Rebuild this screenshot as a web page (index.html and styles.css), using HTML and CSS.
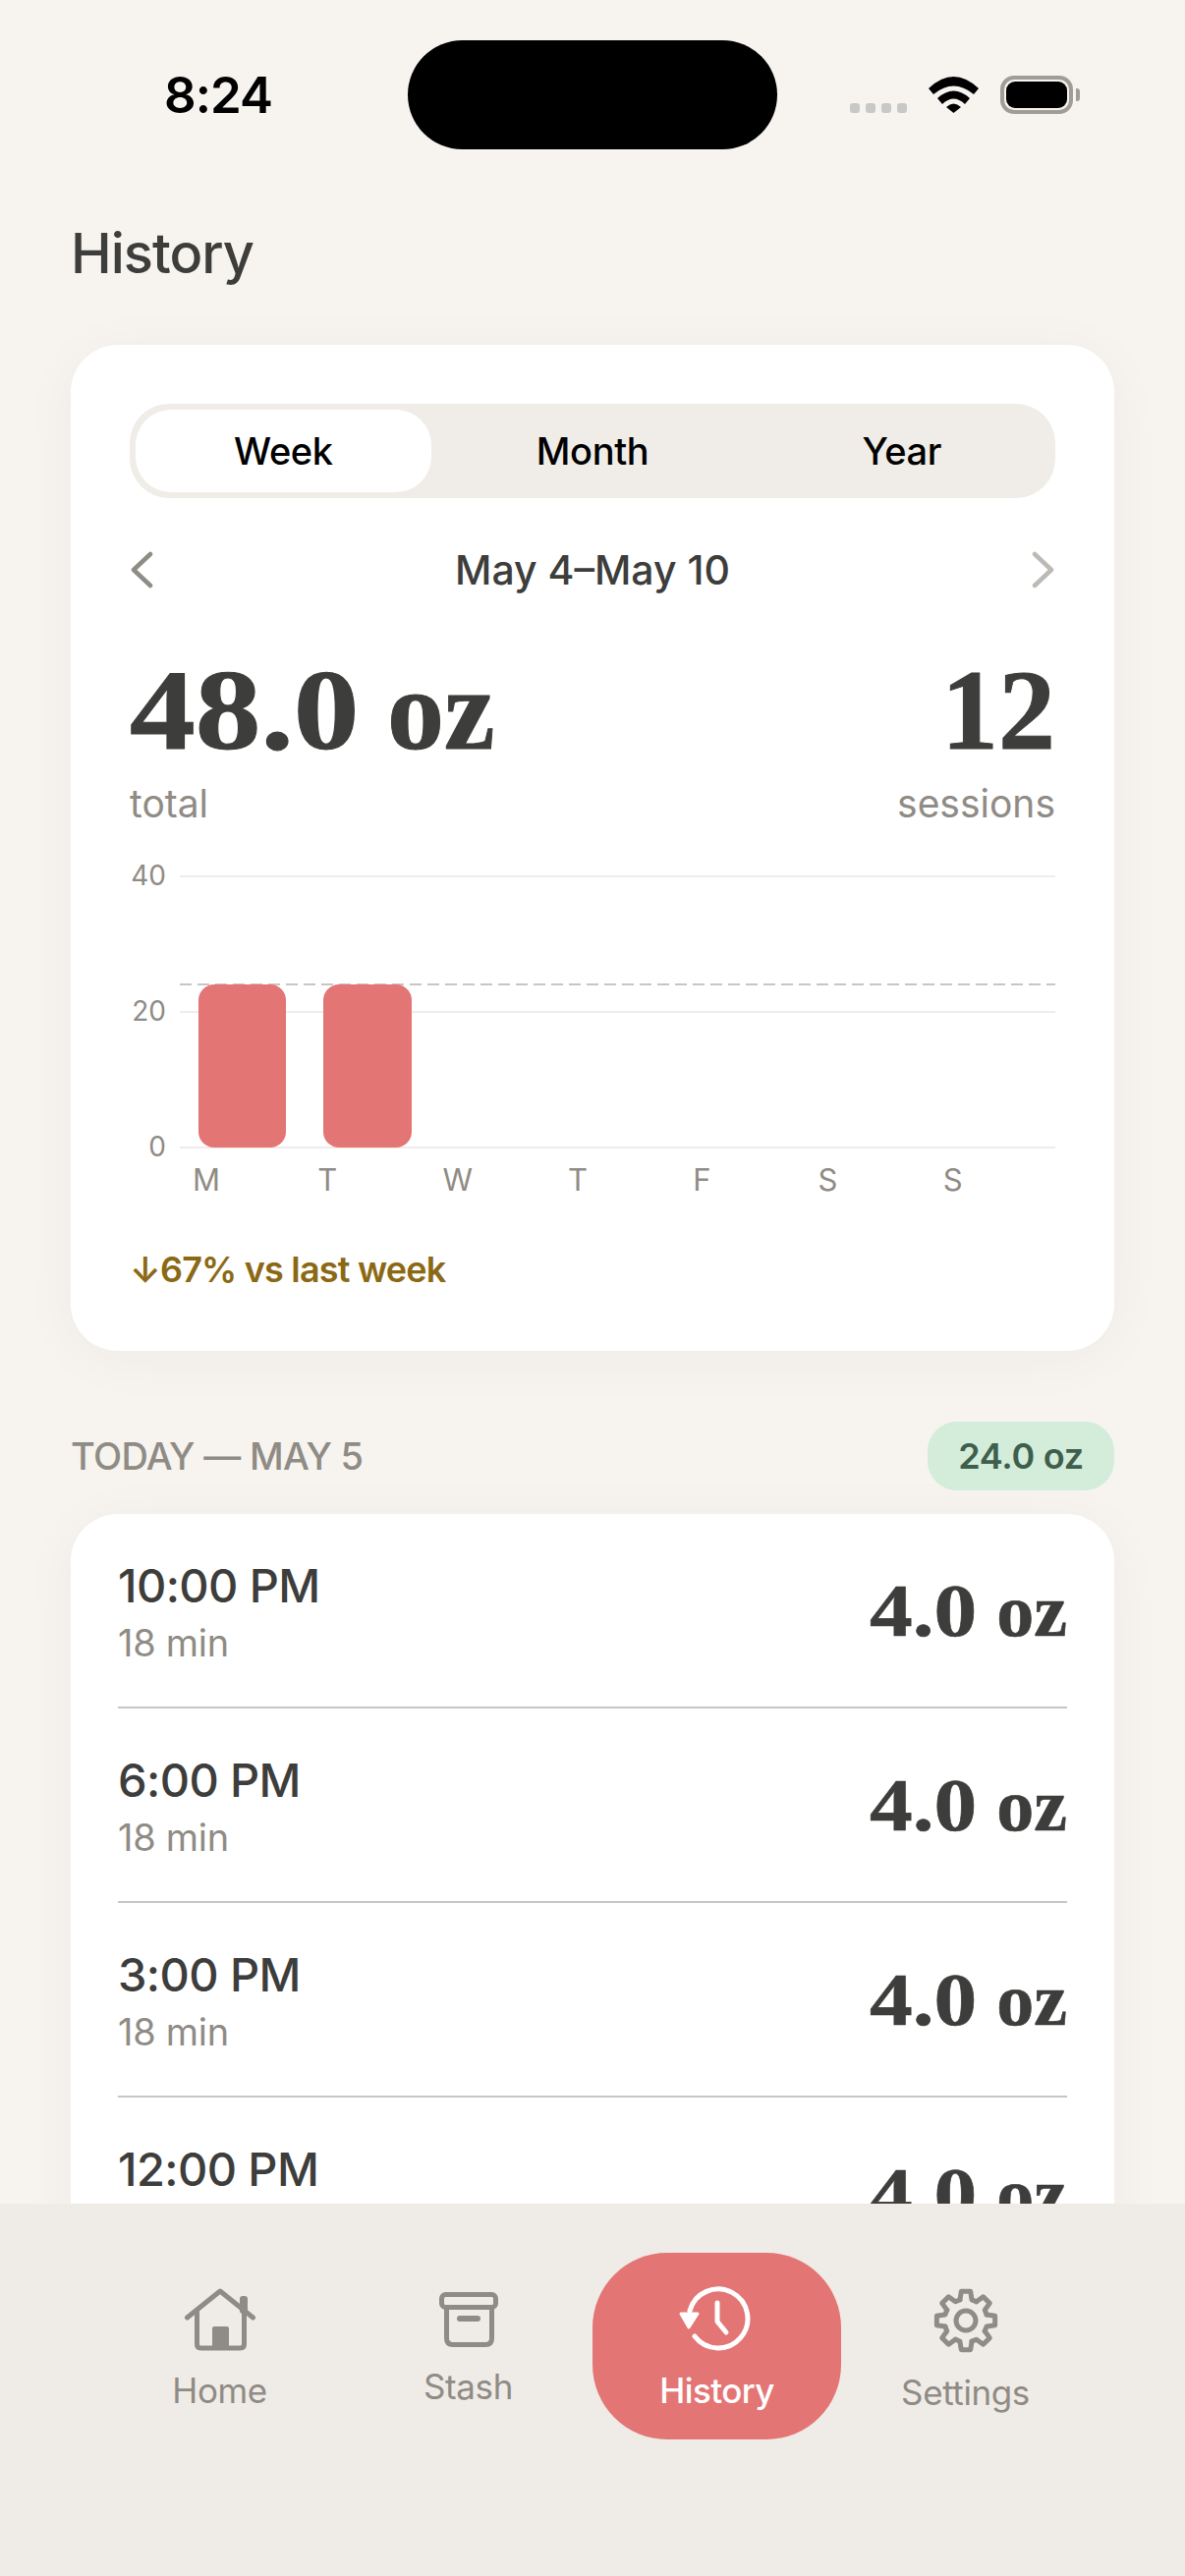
FILE: index.html
```html
<!DOCTYPE html>
<html lang="en">
<head>
<meta charset="utf-8">
<title>History</title>
<link rel="stylesheet" href="styles.css">
</head>
<body>
<div class="screen">
  <header class="status">
    <span class="clock">8:24</span>
    <span class="island"></span>
    <span class="status-icons">
      <span class="signal"><i></i><i></i><i></i><i></i></span>
      <svg class="wifi" viewBox="0 0 51 37"><path d="M0 12 Q25.5 -12 51 12 L46 18 Q25.5 1 5 18Z"/><path d="M9 22 Q25.5 7 42 22 L37 28 Q25.5 17 14 28Z"/><path d="M18 31 Q25.5 24 33 31 L25.5 37Z"/></svg>
      <span class="battery"><span class="battery-fill"></span></span>
      <span class="battery-nub"></span>
    </span>
  </header>

  <main class="content">
    <h1 class="page-title">History</h1>

    <section class="card summary">
      <div class="segments">
        <span class="segment is-active">Week</span>
        <span class="segment">Month</span>
        <span class="segment">Year</span>
      </div>

      <div class="range">
        <svg class="chevron" viewBox="0 0 24 38"><path d="M21 3 L4 19 L21 35"/></svg>
        <span class="range-label">May 4–May 10</span>
        <svg class="chevron is-dim" viewBox="0 0 24 38"><path d="M3 3 L20 19 L3 35"/></svg>
      </div>

      <div class="totals">
        <div class="total">
          <div class="big-number"><span class="figure">48.0</span> oz</div>
          <div class="caption">total</div>
        </div>
        <div class="total is-right">
          <div class="big-number">12</div>
          <div class="caption">sessions</div>
        </div>
      </div>

      <div class="chart">
        <div class="y-axis"><span>40</span><span>20</span><span>0</span></div>
        <div class="plot">
          <div class="grid-band"></div>
          <div class="grid-band"></div>
          <div class="baseline"></div>
          <div class="target-line"></div>
          <div class="bars">
            <div class="bar-cell"><div class="bar"></div></div>
            <div class="bar-cell"><div class="bar"></div></div>
            <div class="bar-cell"></div>
            <div class="bar-cell"></div>
            <div class="bar-cell"></div>
            <div class="bar-cell"></div>
            <div class="bar-cell"></div>
          </div>
        </div>
      </div>
      <div class="days">
        <span>M</span><span>T</span><span>W</span><span>T</span><span>F</span><span>S</span><span>S</span>
      </div>

      <p class="trend">↓67% vs last week</p>
    </section>

    <div class="day-head">
      <span class="day-title">TODAY — MAY 5</span>
      <span class="day-badge">24.0 oz</span>
    </div>

    <section class="card sessions">
      <div class="row">
        <div class="row-info"><div class="row-time">10:00 PM</div><div class="row-sub">18 min</div></div>
        <div class="row-amount"><span class="figure">4.0</span> oz</div>
      </div>
      <div class="row">
        <div class="row-info"><div class="row-time">6:00 PM</div><div class="row-sub">18 min</div></div>
        <div class="row-amount"><span class="figure">4.0</span> oz</div>
      </div>
      <div class="row">
        <div class="row-info"><div class="row-time">3:00 PM</div><div class="row-sub">18 min</div></div>
        <div class="row-amount"><span class="figure">4.0</span> oz</div>
      </div>
      <div class="row">
        <div class="row-info"><div class="row-time">12:00 PM</div><div class="row-sub">18 min</div></div>
        <div class="row-amount"><span class="figure">4.0</span> oz</div>
      </div>
    </section>
  </main>

  <nav class="tabbar">
    <a class="tab">
      <svg class="tab-icon icon-home" viewBox="0 0 72 64">
        <path class="line" d="M2.5 30 L36 3 L69.5 30"/>
        <path class="line" d="M12.5 24 V57 Q12.5 61 16.5 61 H56.5 Q60.5 61 60.5 57 V24"/>
        <rect class="solid" x="56" y="8" width="8" height="18" rx="3"/>
        <rect class="solid" x="28" y="39" width="17" height="23" rx="2"/>
      </svg>
      <span class="tab-label">Home</span>
    </a>
    <a class="tab is-stash">
      <svg class="tab-icon icon-stash" viewBox="0 0 60 56">
        <rect class="line" x="2.5" y="2.5" width="55" height="13" rx="4"/>
        <path class="line" d="M7.5 16 V47 Q7.5 53.5 14 53.5 H47 Q53.5 53.5 53.5 47 V16"/>
        <rect class="solid" x="18" y="24" width="24" height="6" rx="3"/>
      </svg>
      <span class="tab-label">Stash</span>
    </a>
    <a class="tab is-active">
      <svg class="tab-icon icon-history" viewBox="0 0 78 70">
        <path class="line" d="M13 26 A30 30 0 1 1 18 52"/>
        <path class="line" d="M41 18 V37 L50 48"/>
        <path class="solid arrow" d="M4 29 H21 L12 43Z"/>
      </svg>
      <span class="tab-label">History</span>
    </a>
    <a class="tab">
      <svg class="tab-icon icon-gear" viewBox="0 0 66 66">
        <g transform="translate(33 33)">
          <path id="gear-tooth" class="line" d="M-6.06 -21.15 L-4.69 -29.63 L4.69 -29.63 L6.06 -21.15 L10.67 -19.24"/>
          <use href="#gear-tooth" transform="rotate(45)"/>
          <use href="#gear-tooth" transform="rotate(90)"/>
          <use href="#gear-tooth" transform="rotate(135)"/>
          <use href="#gear-tooth" transform="rotate(180)"/>
          <use href="#gear-tooth" transform="rotate(225)"/>
          <use href="#gear-tooth" transform="rotate(270)"/>
          <use href="#gear-tooth" transform="rotate(315)"/>
          <circle class="line" r="10"/>
        </g>
      </svg>
      <span class="tab-label">Settings</span>
    </a>
  </nav>
</div>
</body>
</html>
```

FILE: styles.css
```css
* { box-sizing: border-box; }

html, body { margin: 0; padding: 0; }

body {
  width: 1206px;
  height: 2622px;
  overflow: hidden;
  font-family: "Inter", "Liberation Sans", sans-serif;
  color: #3d3d3b;
  background: #f7f4ef;
}

.screen {
  display: flex;
  flex-direction: column;
  height: 2622px;
}

/* Status bar */
.status {
  flex: none;
  display: grid;
  grid-template-columns: 415px 376px 1fr;
  align-items: center;
  height: 111px;
  margin-top: 41px;
}

.clock {
  padding-left: 167px;
  font-size: 51px;
  font-weight: 600;
  letter-spacing: -1px;
  color: #000;
}

.island {
  height: 111px;
  border-radius: 56px;
  background: #000;
}

.status-icons {
  display: flex;
  align-items: center;
  padding-left: 74px;
}

.signal {
  display: flex;
  gap: 6px;
  align-self: flex-end;
  margin: 0 22px 1px 0;
}

.signal i {
  width: 10px;
  height: 10px;
  border-radius: 3px;
  background: #c8c8c6;
}

.wifi {
  width: 51px;
  height: 37px;
  margin-right: 22px;
  fill: #000;
}

.battery {
  display: block;
  width: 74px;
  height: 39px;
  padding: 2px;
  border: 4px solid #a09d98;
  border-radius: 14px;
}

.battery-fill {
  display: block;
  height: 100%;
  border-radius: 9px;
  background: #000;
}

.battery-nub {
  width: 4px;
  height: 13px;
  margin-left: 3px;
  border-radius: 0 3px 3px 0;
  background: #a09d98;
}

/* Scrolling content */
.content {
  flex: 1;
  min-height: 0;
  overflow: hidden;
  padding: 0 72px;
}

.page-title {
  margin: 72px 0 0;
  font-size: 56px;
  line-height: 68px;
  font-weight: 500;
  letter-spacing: -1px;
}

.card {
  border-radius: 48px;
  background: #fff;
  box-shadow: 0 8px 60px rgba(60, 50, 40, 0.04);
}

.summary {
  height: 1024px;
  margin-top: 59px;
  padding: 60px;
}

/* Week / Month / Year switch */
.segments {
  display: flex;
  gap: 14px;
  height: 96px;
  padding: 6px;
  border-radius: 40px;
  background: #f0ede8;
}

.segment {
  flex: 1;
  display: flex;
  align-items: center;
  justify-content: center;
  border-radius: 36px;
  font-size: 38px;
  font-weight: 450;
  letter-spacing: -0.4px;
  color: #000;
}

.segment.is-active { background: #fff; }

/* Date range stepper */
.range {
  display: flex;
  align-items: center;
  justify-content: space-between;
  height: 60px;
  margin-top: 43px;
}

.range-label {
  font-size: 41px;
  font-weight: 500;
  letter-spacing: 0;
}

.chevron {
  width: 24px;
  height: 38px;
  fill: none;
  stroke: #8f8b85;
  stroke-width: 4.5;
  stroke-linecap: round;
  stroke-linejoin: round;
}

.chevron.is-dim { stroke: #bdbab5; }

/* Headline numbers */
.totals {
  display: flex;
  justify-content: space-between;
  margin-top: 54px;
}

.total.is-right { text-align: right; }

.big-number {
  font-family: "Liberation Serif", serif;
  font-size: 116px;
  line-height: 118px;
  font-weight: 700;
  -webkit-text-stroke: 1px #3d3d3b;
  color: #3d3d3b;
}

/* The numerals are set wider than the unit beside them */
.figure {
  display: inline-block;
  transform-origin: left center;
}

.big-number .figure {
  margin-right: 30px;
  transform: scaleX(1.15);
}

.caption {
  margin-top: 13px;
  font-size: 39px;
  line-height: 46px;
  color: #8f8b85;
  letter-spacing: 0;
}

/* Weekly chart */
.chart {
  display: flex;
  margin-top: 50px;
}

.y-axis {
  flex: none;
  display: flex;
  flex-direction: column;
  justify-content: space-between;
  align-items: flex-end;
  width: 37px;
  height: 276px;
  margin-right: 14px;
  font-size: 28px;
  line-height: 0;
  color: #8f8b85;
}

.plot {
  position: relative;
  flex: 1;
  height: 277px;
}

.grid-band {
  height: 138px;
  border-top: 2px solid #f0ede8;
}

.baseline {
  border-top: 2px solid #f0ede8;
}

.target-line {
  position: absolute;
  left: 0;
  right: 0;
  top: 110px;
  height: 2px;
  background: repeating-linear-gradient(90deg, #c8c6c2 0 12px, transparent 12px 18px);
}

.bars {
  position: absolute;
  inset: 0 0 0 0;
  display: grid;
  grid-template-columns: repeat(7, 1fr);
}

.bar-cell {
  display: flex;
  align-items: flex-end;
  padding: 0 19px;
}

.bar {
  width: 100%;
  height: 166px;
  border-radius: 16px;
  background: #e37575;
}

.days {
  display: grid;
  grid-template-columns: repeat(7, 127.3px);
  margin: 13px 0 0 51px;
  padding-left: 13px;
  font-size: 31px;
  line-height: 40px;
  color: #8f8b85;
}

.trend {
  margin: 50px 0 0;
  font-size: 36px;
  line-height: 42px;
  font-weight: 600;
  letter-spacing: -0.8px;
  color: #8b6914;
}

/* Day heading */
.day-head {
  display: flex;
  align-items: center;
  justify-content: space-between;
  margin-top: 72px;
}

.day-title {
  font-size: 38px;
  font-weight: 500;
  letter-spacing: -0.7px;
  color: #8f8b85;
}

.day-badge {
  width: 190px;
  height: 70px;
  line-height: 70px;
  text-align: center;
  border-radius: 30px;
  font-size: 36px;
  font-weight: 600;
  letter-spacing: -0.3px;
  color: #3f5f4d;
  background: #d4ecda;
}

/* Session list */
.sessions {
  margin-top: 24px;
  padding: 0 48px;
}

.row {
  display: flex;
  align-items: center;
  justify-content: space-between;
  height: 198px;
  border-bottom: 2px solid #c8c6c2;
}

.row-info { padding-top: 4px; }

.row-time {
  font-size: 47px;
  line-height: 58px;
  font-weight: 500;
  letter-spacing: -0.6px;
}

.row-sub {
  margin-top: 4px;
  font-size: 38px;
  line-height: 50px;
  letter-spacing: -0.3px;
  color: #8f8b85;
}

.row-amount {
  font-family: "Liberation Serif", serif;
  font-size: 76px;
  font-weight: 700;
  -webkit-text-stroke: 0.6px #3d3d3b;
  color: #3d3d3b;
}

.row-amount .figure {
  margin-right: 15px;
  transform: scaleX(1.15);
}

/* Bottom tab bar */
.tabbar {
  flex: none;
  position: relative;
  display: grid;
  grid-template-columns: repeat(4, 253px);
  align-items: start;
  height: 379px;
  padding: 50px 97px 0;
  background: #efece7;
}

.tab {
  display: flex;
  flex-direction: column;
  align-items: center;
  height: 190px;
  padding-top: 36px;
  color: #8f8b85;
}

.tab.is-active {
  color: #fff;
  border-radius: 76px;
  background: #e37575;
}

.tab.is-stash {
  padding-top: 40px;
}

.tab-icon {
  flex: none;
  display: block;
  overflow: visible;
}

.icon-home { width: 72px; height: 64px; }
.icon-stash { width: 60px; height: 56px; }
.icon-history { width: 78px; height: 70px; margin-top: -3px; margin-left: -4px; }
.icon-gear { width: 66px; height: 66px; }

.tab-icon .line {
  fill: none;
  stroke: currentColor;
  stroke-width: 5;
  stroke-linecap: round;
  stroke-linejoin: round;
}

.tab-icon .solid { fill: currentColor; }

.tab-icon .arrow {
  stroke: currentColor;
  stroke-width: 3;
  stroke-linejoin: round;
}

.tab-label {
  margin-top: 18px;
  font-size: 35px;
  line-height: 44px;
  letter-spacing: -0.4px;
}

.tab.is-active .tab-label {
  margin-top: 15px;
  font-weight: 500;
  letter-spacing: -0.6px;
}

.tab.is-stash .tab-label { margin-top: 18px; }
```
